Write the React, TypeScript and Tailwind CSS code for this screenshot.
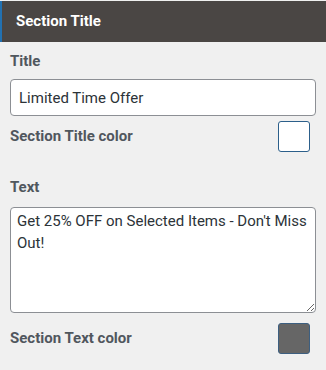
export default function App() {
  return (
    <div className="w-[326px] h-[370px] bg-[#f0f0f0] font-['Roboto',sans-serif] overflow-hidden">
      <div className="mt-px h-[41px] bg-[#4a4644] border-l-2 border-[#2271b1] flex items-center pl-[14px]">
        <span className="text-white font-bold text-[15px]">Section Title</span>
      </div>
      <div className="px-[10px] pt-[9px]">
        <div className="text-[15px] font-bold text-[#50575e] leading-[20px]">Title</div>
        <input
          type="text"
          defaultValue="Limited Time Offer"
          className="mt-[8px] w-[306px] h-[37px] rounded-[4px] border border-[#8c8f94] bg-white px-[8px] text-[15px] text-[#2c3338] outline-none"
        />
        <div className="flex items-center justify-between mt-[5px] pr-[6px]">
          <span className="text-[15px] font-bold text-[#50575e]">Section Title color</span>
          <div className="w-[32px] h-[31px] rounded-[3px] border border-[#2c5f8a] bg-white" />
        </div>
        <div className="mt-[25px] text-[15px] font-bold text-[#50575e] leading-[20px]">Text</div>
        <textarea
          defaultValue="Get 25% OFF on Selected Items - Don't Miss Out!"
          className="mt-[10px] block w-[306px] h-[106px] rounded-[4px] border border-[#8c8f94] bg-white px-[6px] py-[2px] text-[15px] leading-[22px] text-[#2c3338] outline-none resize-y"
        />
        <div className="flex items-center justify-between mt-[10px] pr-[6px]">
          <span className="text-[15px] font-bold text-[#50575e]">Section Text color</span>
          <div className="w-[32px] h-[31px] rounded-[3px] border border-[#3d5f80] bg-[#666666]" />
        </div>
      </div>
    </div>
  );
}
